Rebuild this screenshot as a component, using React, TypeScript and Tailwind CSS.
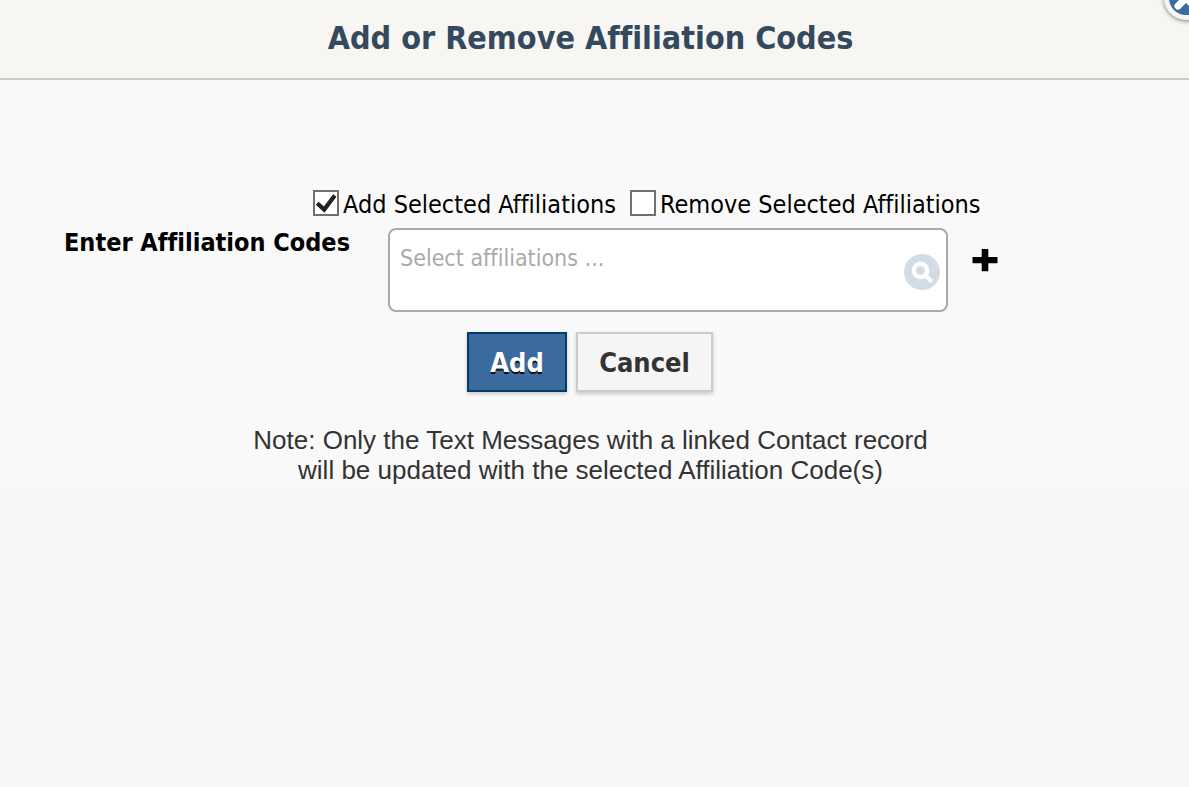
import { useState } from "react";

type ModeOptionProps = {
  label: string;
  checked: boolean;
  onSelect: () => void;
};

function ModeOption({ label, checked, onSelect }: ModeOptionProps) {
  return (
    <label className="flex items-start gap-1 whitespace-nowrap">
      <span className="grid size-[26px] shrink-0">
        <input
          type="checkbox"
          checked={checked}
          onChange={onSelect}
          className="col-start-1 row-start-1 size-[26px] appearance-none border-2 border-[#707070] bg-white"
        />
        {checked && (
          <svg
            viewBox="0 0 26 26"
            className="pointer-events-none col-start-1 row-start-1 size-[26px]"
            aria-hidden="true"
          >
            <path
              d="M4.2 13.2 L11.2 19.6 L21.8 5.4"
              fill="none"
              stroke="#212121"
              strokeWidth="4.2"
            />
          </svg>
        )}
      </span>
      {label}
    </label>
  );
}

export default function App() {
  const [mode, setMode] = useState<"add" | "remove">("add");

  return (
    <div className="min-h-screen overflow-hidden bg-[#f8f8f8] font-['DejaVu_Sans_Condensed','DejaVu_Sans',sans-serif] text-[25px] leading-[30px] text-black [font-variant-ligatures:none]">
      <header className="relative flex h-20 justify-center border-b-2 border-[#ccccc0] bg-[#f7f6f2] pt-4 pr-2">
        <h1 className="text-[32px] leading-[44px] font-bold text-[#34495e]">
          Add or Remove Affiliation Codes
        </h1>
        <button
          type="button"
          aria-label="Close"
          className="absolute -top-6 -right-[19px] grid size-11 place-items-center rounded-full border-[5px] border-[#f5f5f5] bg-[#3a6a9e] shadow-[0_1px_4px_rgba(0,0,0,0.5)]"
        >
          <svg viewBox="0 0 32 32" className="size-8" aria-hidden="true">
            <path
              d="M8 8 L24 24 M24 8 L8 24"
              stroke="#fff"
              strokeWidth="7"
              strokeLinecap="round"
            />
          </svg>
        </button>
      </header>

      <main className="bg-[#f9f9f9] pt-[110px]">
        <form onSubmit={(event) => event.preventDefault()}>
          <div className="flex gap-[14px] pl-[313px]">
            <ModeOption
              label="Add Selected Affiliations"
              checked={mode === "add"}
              onSelect={() => setMode("add")}
            />
            <ModeOption
              label="Remove Selected Affiliations"
              checked={mode === "remove"}
              onSelect={() => setMode("remove")}
            />
          </div>

          <div className="mt-2 flex items-start pl-16">
            <label
              htmlFor="codes"
              className="w-[324px] shrink-0 font-bold whitespace-nowrap"
            >
              Enter Affiliation Codes
            </label>
            <div className="flex h-21 w-[560px] items-center rounded-lg border-2 border-[#aaaaaa] bg-white pr-[6px] pl-[10px]">
              <input
                id="codes"
                type="text"
                placeholder="Select affiliations ..."
                className="mb-6 min-w-0 flex-1 bg-transparent text-[23px] text-[#aaaaaa] outline-none placeholder:text-[#aaaaaa]"
              />
              <button
                type="button"
                aria-label="Search affiliations"
                className="mt-1 size-9 shrink-0 rounded-full bg-[#d1dce7]"
              >
                <svg viewBox="0 0 36 36" className="size-9" aria-hidden="true">
                  <circle
                    cx="16.5"
                    cy="16.5"
                    r="6.7"
                    fill="none"
                    stroke="#fff"
                    strokeWidth="4.4"
                  />
                  <path
                    d="M21.5 21.5 L26.5 26.5"
                    stroke="#fff"
                    strokeWidth="4.4"
                    strokeLinecap="round"
                  />
                </svg>
              </button>
            </div>
            <button
              type="button"
              aria-label="Add affiliation"
              className="mt-5 ml-6 size-[26px]"
            >
              <svg viewBox="0 0 26 26" className="size-[26px]" aria-hidden="true">
                <path d="M9.7 1h6.6v8h9.2v6.2h-9.2v8H9.7v-8H.5V9h9.2z" fill="#000" />
              </svg>
            </button>
          </div>

          <div className="mt-5 flex justify-center gap-[9px] pr-[9px] text-[27px] font-bold">
            <button
              type="submit"
              className="h-15 w-25 border-2 border-[#003e67] bg-[#3a6a9e] pt-[2px] text-white shadow-[0_2px_4px_rgba(0,0,0,0.2)] [text-shadow:0_2px_0_#111]"
            >
              Add
            </button>
            <button
              type="button"
              className="h-15 w-[137px] border-2 border-[#cccccc] bg-[#f5f5f5] pt-[2px] text-[#333333] shadow-[0_2px_4px_rgba(0,0,0,0.2)]"
            >
              Cancel
            </button>
          </div>
        </form>

        <p className="mt-[33px] pr-2 text-center font-['Liberation_Sans',sans-serif] text-[26px] text-[#333333]">
          Note: Only the Text Messages with a linked Contact record
          <br />
          will be updated with the selected Affiliation Code(s)
        </p>
      </main>
    </div>
  );
}
